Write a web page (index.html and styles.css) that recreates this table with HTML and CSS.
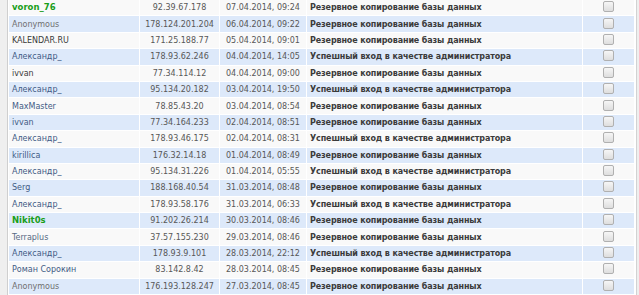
FILE: index.html
```html
<!DOCTYPE html>
<html lang="ru">
<head>
<meta charset="utf-8">
<title>Журнал</title>
<link rel="stylesheet" href="styles.css">
</head>
<body>
<div class="page">
  <div class="gutter-left"></div>
  <table class="log">
    <tbody>
      <tr class="odd"><td class="user green">voron_76</td><td class="ip">92.39.67.178</td><td class="date">07.04.2014, 09:24</td><td class="act">Резервное копирование базы данных</td><td class="chk"><span class="cb"></span></td></tr>
      <tr class="even"><td class="user grey">Anonymous</td><td class="ip">178.124.201.204</td><td class="date">06.04.2014, 09:22</td><td class="act">Резервное копирование базы данных</td><td class="chk"><span class="cb"></span></td></tr>
      <tr class="odd"><td class="user dark">KALENDAR.RU</td><td class="ip">171.25.188.77</td><td class="date">05.04.2014, 09:01</td><td class="act">Резервное копирование базы данных</td><td class="chk"><span class="cb"></span></td></tr>
      <tr class="even"><td class="user">Александр_</td><td class="ip">178.93.62.246</td><td class="date">04.04.2014, 14:05</td><td class="act">Успешный вход в качестве администратора</td><td class="chk"><span class="cb"></span></td></tr>
      <tr class="odd"><td class="user dark">ivvan</td><td class="ip">77.34.114.12</td><td class="date">04.04.2014, 09:00</td><td class="act">Резервное копирование базы данных</td><td class="chk"><span class="cb"></span></td></tr>
      <tr class="even"><td class="user">Александр_</td><td class="ip">95.134.20.182</td><td class="date">03.04.2014, 19:50</td><td class="act">Успешный вход в качестве администратора</td><td class="chk"><span class="cb"></span></td></tr>
      <tr class="odd"><td class="user">MaxMaster</td><td class="ip">78.85.43.20</td><td class="date">03.04.2014, 08:54</td><td class="act">Резервное копирование базы данных</td><td class="chk"><span class="cb"></span></td></tr>
      <tr class="even"><td class="user">ivvan</td><td class="ip">77.34.164.233</td><td class="date">02.04.2014, 08:51</td><td class="act">Резервное копирование базы данных</td><td class="chk"><span class="cb"></span></td></tr>
      <tr class="odd"><td class="user">Александр_</td><td class="ip">178.93.46.175</td><td class="date">02.04.2014, 08:31</td><td class="act">Успешный вход в качестве администратора</td><td class="chk"><span class="cb"></span></td></tr>
      <tr class="even"><td class="user">kirillica</td><td class="ip">176.32.14.18</td><td class="date">01.04.2014, 08:49</td><td class="act">Резервное копирование базы данных</td><td class="chk"><span class="cb"></span></td></tr>
      <tr class="odd"><td class="user">Александр_</td><td class="ip">95.134.31.226</td><td class="date">01.04.2014, 05:55</td><td class="act">Успешный вход в качестве администратора</td><td class="chk"><span class="cb"></span></td></tr>
      <tr class="even"><td class="user">Serg</td><td class="ip">188.168.40.54</td><td class="date">31.03.2014, 08:48</td><td class="act">Резервное копирование базы данных</td><td class="chk"><span class="cb"></span></td></tr>
      <tr class="odd"><td class="user">Александр_</td><td class="ip">178.93.58.176</td><td class="date">31.03.2014, 06:33</td><td class="act">Успешный вход в качестве администратора</td><td class="chk"><span class="cb"></span></td></tr>
      <tr class="even"><td class="user green">Nikit0s</td><td class="ip">91.202.26.214</td><td class="date">30.03.2014, 08:46</td><td class="act">Резервное копирование базы данных</td><td class="chk"><span class="cb"></span></td></tr>
      <tr class="odd"><td class="user slate">Terraplus</td><td class="ip">37.57.155.230</td><td class="date">29.03.2014, 08:46</td><td class="act">Резервное копирование базы данных</td><td class="chk"><span class="cb"></span></td></tr>
      <tr class="even"><td class="user">Александр_</td><td class="ip">178.93.9.101</td><td class="date">28.03.2014, 22:12</td><td class="act">Успешный вход в качестве администратора</td><td class="chk"><span class="cb"></span></td></tr>
      <tr class="odd"><td class="user">Роман Сорокин</td><td class="ip">83.142.8.42</td><td class="date">28.03.2014, 08:45</td><td class="act">Резервное копирование базы данных</td><td class="chk"><span class="cb"></span></td></tr>
      <tr class="even"><td class="user grey">Anonymous</td><td class="ip">176.193.128.247</td><td class="date">27.03.2014, 08:45</td><td class="act">Резервное копирование базы данных</td><td class="chk"><span class="cb"></span></td></tr>
    </tbody>
  </table>
  <div class="gutter-right"></div>
</div>
</body>
</html>
```

FILE: styles.css
```css
html, body {
  margin: 0;
  padding: 0;
  background: #ffffff;
}
body {
  font-family: "DejaVu Sans", Verdana, sans-serif;
  font-size: 8px;
  color: #555555;
  overflow: hidden;
}
.page {
  display: flex;
  align-items: stretch;
  height: 295px;
  overflow: hidden;
}
.gutter-left {
  width: 7px;
  flex: none;
  background: #efefef;
  border-right: 1px solid #cfcfcf;
}
.gutter-right {
  width: 3px;
  flex: none;
  margin-left: 1px;
  background: #efefef;
  border-left: 1px solid #d2d2d2;
}
.log {
  flex: none;
  width: 627px;
  border-collapse: separate;
  border-spacing: 1px;
  margin-top: -1px;
  table-layout: fixed;
  align-self: flex-start;
}
.log td {
  height: 15.4px;
  padding: 0;
  white-space: nowrap;
  overflow: hidden;
  line-height: 15px;
}
.log tr.odd td { background: #f9f9f9; }
.log tr.even td { background: #dde9fa; }
.user {
  width: 127px;
  padding-left: 3px !important;
  color: #3f5b85;
}
.user.green { color: #1a9e1a; font-weight: bold; font-size: 8.5px; }
.user.grey { color: #6f6f6f; }
.user.dark { color: #3a3a3a; }
.user.slate { color: #566a84; }
.ip { width: 79px; text-align: center; color: #575757; }
.date { width: 86px; text-align: center; color: #575757; }
.act {
  width: 272px;
  padding-left: 3px !important;
  font-weight: bold;
  letter-spacing: -0.12px;
  color: #3b3b3b;
}
.chk { width: 51px; text-align: center; }
.cb {
  display: inline-block;
  width: 9px;
  height: 9px;
  border: 1px solid #b0b0b0;
  border-radius: 2px;
  background: linear-gradient(#f6f6f6, #dedede);
  vertical-align: middle;
  margin-top: -2px;
}
```
